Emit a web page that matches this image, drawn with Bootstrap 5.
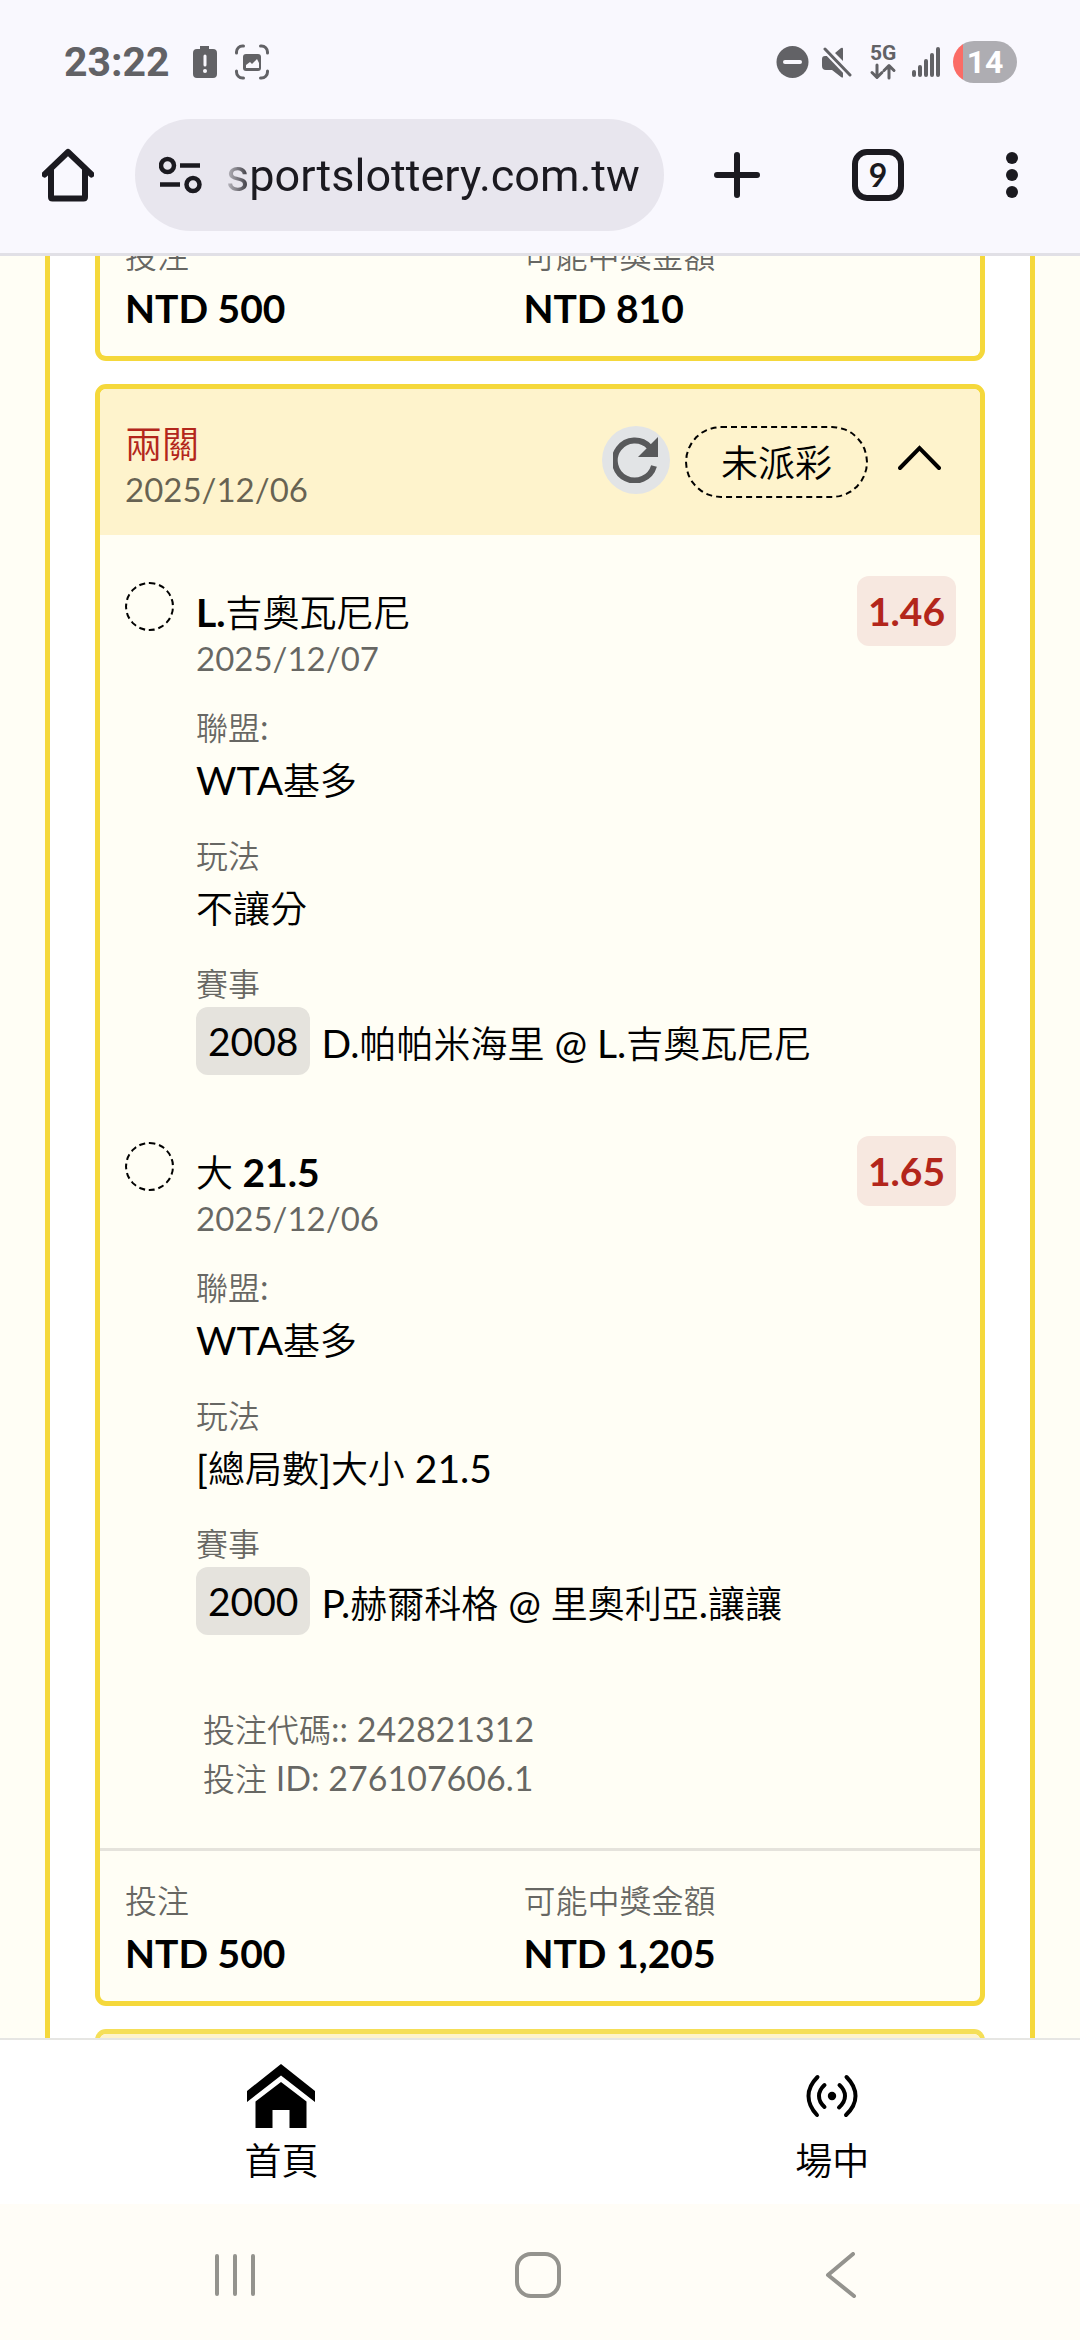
<!DOCTYPE html>
<html lang="zh-Hant">
<head>
<meta charset="utf-8">
<meta name="viewport" content="width=device-width, initial-scale=1">
<title>投注紀錄</title>
<link href="https://cdn.jsdelivr.net/npm/bootstrap@5.3.0/dist/css/bootstrap.min.css" rel="stylesheet">
<style>
  :root { --cream: #fffef5; --gold: #f5d83b; --ink: #1b1a20; --status: #626266; --red: #b3261b; }
  body { background: var(--cream); color: #000; font-family: Lato, "Noto Sans CJK TC", sans-serif; font-size: 39px; line-height: 58px; }
  .zh { font-family: "Noto Sans CJK TC", sans-serif; font-size: 37px; line-height: 1; font-weight: 350; }
  .text-sm .zh { font-size: 32px; }
  .text-sm { font-size: 34px; line-height: 48px; color: rgba(0,0,0,.6); }
  .day { font-size: 33px; line-height: 46px; color: rgba(0,0,0,.6); }
  svg { display: block; flex: none; }
  .icon-btn { border: 0; padding: 0; background: none; color: inherit; flex: none; }

  /* system status and browser bar */
  .chrome-top { background: #f9f8fe; border-bottom: 3px solid #e1e0e6; color: var(--ink); font-family: Roboto, sans-serif; }
  .status-row { height: 84px; padding: 40px 63px 0 64px; color: var(--status); line-height: 44px; }
  .clock { font-size: 41px; font-weight: 700; margin-right: 23px; }
  .capture { margin-left: 18px; }
  .signals { gap: 13px; }
  .batt { width: 64px; height: 42px; border-radius: 21px; background: linear-gradient(90deg, #fb6c66 10px, #aeadb2 10px); color: #fff; font-size: 32px; font-weight: 700; line-height: 42px; }
  .tool-row { padding: 35px 62px 22px 42px; }
  .omnibox { height: 112px; border-radius: 56px; background: #e8e6ee; margin: 0 50px 0 41px; padding: 0 22px 0 24px; gap: 24px; }
  .omnibox input { width: 0; font-size: 45px; color: var(--ink); border: 0; background: none; outline: 0; padding: 0; height: 80px; -webkit-mask-image: linear-gradient(90deg, rgba(0,0,0,.2), #000 28px); mask-image: linear-gradient(90deg, rgba(0,0,0,.2), #000 28px); }
  .tab-count { width: 52px; height: 52px; border: 6px solid var(--ink); border-radius: 15px; font: 700 32px/40px Lato, sans-serif; margin: 0 102px 0 92px; }

  /* bet list */
  .list-frame { margin: -50px 45px 0; padding: 0 45px; background: #fff; border: solid var(--gold); border-width: 0 5px; }
  .bet { border: 5px solid var(--gold); border-radius: 11px; background: var(--cream); overflow: hidden; margin-bottom: 23px; flex: none; }
  .bet-faded { border-color: #f5df58; }
  .bet-head { background: #fef3cc; padding: 31px 39px 23px 25px; min-height: 146px; }
  .row-tight { line-height: 46px; }
  .bet-type { color: var(--red); }
  .refresh { width: 68px; height: 68px; background: #e2e4e6; }
  .state { border: 2px dashed #000; border-radius: 36px; height: 72px; padding: 0 34px; margin-left: 15px; margin-right: 30px; line-height: 68px; white-space: nowrap; }
  .legs { padding: 41px 24px 46px 25px; }
  .leg + .leg { margin-top: 61px; }
  .dot { width: 49px; height: 49px; border: 2px dashed #000; border-radius: 50%; margin: 6px 22px 0 0; flex: none; }
  .leg-text { padding-top: 13px; }
  .item { margin-top: 22px; }
  .odds { height: 70px; border-radius: 12px; background: #f7e8e0; color: var(--red); padding: 0 11px; line-height: 70px; }
  .match-no { height: 68px; line-height: 68px; border-radius: 12px; background: #e5e3dd; padding: 0 12px; margin-right: 11px; }
  .match-row { line-height: 72px; }
  .codes { margin-top: 65px; padding-left: 78px; line-height: 49px; }
  .leg + .leg, .codes { position: static; }
  .bet-foot { padding: 25px 25px 19px; min-height: 150px; }
  .bet-foot.ruled { border-top: 3px solid #e5e3dc; }
  .stake { flex: 0 0 48%; }
  .leg { margin-bottom: 0; }
  .leg:first-child { margin-bottom: -4px; }

  /* bottom bars */
  .site-nav { border-top: 2px solid #e6e6e3; background: #fff; height: 166px; padding: 23px 0 0 6px; }
  .site-nav a { flex: 0 0 51vw; color: #000; text-decoration: none; }
  .nav-pic { height: 66px; margin-bottom: 12px; }
  .sys-nav { height: 136px; background: #fffdf7; color: #94938e; padding: 6px 220px 0 213px; }
</style>
</head>
<body class="vh-100 d-flex flex-column overflow-hidden">

<header class="chrome-top flex-shrink-0">
  <div class="status-row d-flex align-items-center">
    <span class="clock">23:22</span>
    <svg width="24" height="34" viewBox="0 0 24 34" fill="currentColor"><path d="M7 1h9v3h4a4 4 0 0 1 4 4v21a4 4 0 0 1-4 4H4a4 4 0 0 1-4-4V8a4 4 0 0 1 4-4h3z"/><path d="M12 11v9" stroke="#f9f8fe" stroke-width="3" stroke-linecap="round"/><circle cx="12" cy="26" r="2" fill="#f9f8fe"/></svg>
    <svg class="capture" width="34" height="36" viewBox="0 0 34 36" fill="none" stroke="currentColor" stroke-width="3" stroke-linecap="round"><path d="M1.500 9V8a6 6 0 0 1 6-6h1M25.500 2h1a6 6 0 0 1 6 6v1M32.500 27v1a6 6 0 0 1-6 6h-1M8.500 34h-1a6 6 0 0 1-6-6v-1"/><rect x="8" y="10" width="18" height="17" rx="3" fill="currentColor" stroke="none"/><path d="M11 24v-3l4-3 2 2 5-5 2 4v5z" fill="#f9f8fe" stroke="none"/></svg>
    <div class="signals d-flex align-items-center ms-auto">
      <svg width="33" height="34" viewBox="0 0 33 34"><circle cx="16.500" cy="17" r="16" fill="currentColor"/><path d="M9 17h15" stroke="#f9f8fe" stroke-width="4" stroke-linecap="round"/></svg>
      <svg width="30" height="32" viewBox="0 0 30 32" fill="currentColor"><path d="M0 13q0-3 3-3h5l13 13v8q0 1-2 0l-9-7H4q-4 0-4-4zM13 7l6-5q2-1 2 1v12z"/><path d="M3 3l25 26" stroke="#f9f8fe" stroke-width="7"/><path d="M3 3l25 26" stroke="currentColor" stroke-width="3" stroke-linecap="round"/></svg>
      <svg width="34" height="40" viewBox="0 0 34 40"><text x="5" y="18" font-family="Roboto, sans-serif" font-weight="700" font-size="21" fill="currentColor">5G</text><g fill="none" stroke="currentColor" stroke-width="3" stroke-linecap="round" stroke-linejoin="round"><path d="M12 23v12M7 30.500l5 5 5-5M24 36V24M19 28.500l5-5 5 5"/></g></svg>
      <svg width="28" height="30" viewBox="0 0 28 30" stroke="currentColor" stroke-width="4" stroke-linecap="round"><path d="M2 25v3M8 20v8M14 14v14M20 8v20M26 2v26"/></svg>
      <span class="batt text-center">14</span>
    </div>
  </div>
  <div class="tool-row d-flex align-items-center">
    <button class="icon-btn" aria-label="Home"><svg width="52" height="54" viewBox="0 0 52 54" fill="none" stroke="currentColor" stroke-width="6" stroke-linejoin="round" stroke-linecap="round"><path d="M2.500 26.500 26 4l23.500 22.500M9 22v27q0 1.500 1.500 1.500h31Q43 50.500 43 49V22"/></svg></button>
    <div class="omnibox flex-grow-1 d-flex align-items-center">
      <svg width="43" height="38" viewBox="0 0 43 38" fill="none" stroke="currentColor" stroke-width="4.500"><circle cx="8.500" cy="9.500" r="6.500"/><circle cx="34" cy="28.500" r="6.500"/><path d="M21 9.500h20M1 28.500h20"/></svg>
      <input class="flex-grow-1" type="text" aria-label="Address" value="sportslottery.com.tw">
    </div>
    <button class="icon-btn" aria-label="New tab"><svg width="46" height="46" viewBox="0 0 46 46" stroke="currentColor" stroke-width="6" stroke-linecap="round"><path d="M23 3v40M3 23h40"/></svg></button>
    <button class="icon-btn tab-count text-center" aria-label="Tabs">9</button>
    <button class="icon-btn" aria-label="Menu"><svg width="12" height="46" viewBox="0 0 12 46" fill="currentColor"><circle cx="6" cy="6" r="6"/><circle cx="6" cy="23" r="6"/><circle cx="6" cy="40" r="6"/></svg></button>
  </div>
</header>

<main class="flex-grow-1 overflow-hidden">
  <div class="list-frame d-flex flex-column">

    <section class="bet border-top-0">
      <div class="bet-foot d-flex">
        <div class="stake"><div class="text-sm"><span class="zh">投注</span></div><div class="fw-bold">NTD 500</div></div>
        <div><div class="text-sm"><span class="zh">可能中獎金額</span></div><div class="fw-bold">NTD 810</div></div>
      </div>
    </section>

    <section class="bet">
      <div class="bet-head d-flex align-items-center">
        <div class="flex-grow-1">
          <div class="row-tight bet-type"><span class="zh">兩關</span></div>
          <div class="day">2025/12/06</div>
        </div>
        <div class="d-flex align-items-center mb-2">
          <button class="icon-btn refresh rounded-circle d-flex align-items-center justify-content-center mb-1" aria-label="重新整理"><svg width="46" height="46" viewBox="0 0 46 46" fill="none"><path d="M36.500 10A20 20 0 1 0 41 29" stroke="#58595b" stroke-width="6"/><path d="M45 0v20H25z" fill="#58595b"/></svg></button>
          <span class="state"><span class="zh">未派彩</span></span>
          <button class="icon-btn mb-2" aria-label="收合"><svg width="43" height="26" viewBox="0 0 43 26" fill="none" stroke="#000" stroke-width="4" stroke-linecap="round"><path d="M2 23 21.500 3 41 23"/></svg></button>
        </div>
      </div>

      <div class="legs">
        <article class="leg d-flex align-items-start">
          <span class="dot"></span>
          <div class="leg-text flex-grow-1">
            <div class="row-tight fw-bold">L.<span class="zh">吉奧瓦尼尼</span></div>
            <div class="day">2025/12/07</div>
            <div class="item"><div class="text-sm"><span class="zh">聯盟</span>:</div><div>WTA<span class="zh">基多</span></div></div>
            <div class="item"><div class="text-sm"><span class="zh">玩法</span></div><div><span class="zh">不讓分</span></div></div>
            <div class="item"><div class="text-sm"><span class="zh">賽事</span></div>
              <div class="d-flex"><span class="match-no">2008</span><span class="match-row">D.<span class="zh">帕帕米海里</span> @ L.<span class="zh">吉奧瓦尼尼</span></span></div></div>
          </div>
          <span class="odds fw-bold text-center">1.46</span>
        </article>

        <article class="leg d-flex align-items-start">
          <span class="dot"></span>
          <div class="leg-text flex-grow-1">
            <div class="row-tight fw-bold"><span class="zh">大</span> 21.5</div>
            <div class="day">2025/12/06</div>
            <div class="item"><div class="text-sm"><span class="zh">聯盟</span>:</div><div>WTA<span class="zh">基多</span></div></div>
            <div class="item"><div class="text-sm"><span class="zh">玩法</span></div><div>[<span class="zh">總局數</span>]<span class="zh">大小</span> 21.5</div></div>
            <div class="item"><div class="text-sm"><span class="zh">賽事</span></div>
              <div class="d-flex"><span class="match-no">2000</span><span class="match-row">P.<span class="zh">赫爾科格</span> @ <span class="zh">里奧利亞</span>.<span class="zh">讓讓</span></span></div></div>
          </div>
          <span class="odds fw-bold text-center">1.65</span>
        </article>

        <div class="codes text-sm">
          <div><span class="zh">投注代碼</span>:: 242821312</div>
          <div><span class="zh">投注</span> ID: 276107606.1</div>
        </div>
      </div>

      <div class="bet-foot ruled d-flex">
        <div class="stake"><div class="text-sm"><span class="zh">投注</span></div><div class="fw-bold">NTD 500</div></div>
        <div><div class="text-sm"><span class="zh">可能中獎金額</span></div><div class="fw-bold">NTD 1,205</div></div>
      </div>
    </section>

    <section class="bet bet-faded"><div class="bet-head"></div></section>
  </div>
</main>

<nav class="site-nav d-flex flex-shrink-0 overflow-hidden">
  <a href="#" class="d-flex flex-column align-items-center">
    <span class="nav-pic d-flex align-items-center"><svg width="68" height="64" viewBox="0 0 68 64"><path d="M34 0 68 27v11L34 11.500 0 38V27z"/><path d="M34 18 59.500 37.500V64H42.500V46h-17v18H8.500V37.500z"/></svg></span>
    <span class="zh">首頁</span>
  </a>
  <a href="#" class="d-flex flex-column align-items-center">
    <span class="nav-pic d-flex align-items-center"><svg width="52" height="44" viewBox="0 0 52 44" fill="none" stroke="#000" stroke-width="4" stroke-linecap="round"><path d="M11.500 3Q2.500 12 2.500 22t8.500 19M40.500 3q9 9 9 19T40 41M18.500 11q-5.500 5-5.500 11t5.500 11M33.500 11q5.500 5 5.500 11t-6 11.500"/><circle cx="26" cy="22" r="4.200" fill="#000" stroke="none"/></svg></span>
    <span class="zh">場中</span>
  </a>
</nav>

<div class="sys-nav d-flex flex-shrink-0 align-items-center justify-content-between">
  <button class="icon-btn" aria-label="Recents"><svg width="44" height="44" viewBox="0 0 44 44" stroke="currentColor" stroke-width="4" stroke-linecap="round"><path d="M4 3v38M22 3v38M40 3v38"/></svg></button>
  <button class="icon-btn" aria-label="Home"><svg width="46" height="46" viewBox="0 0 46 46" fill="none" stroke="currentColor" stroke-width="4"><rect x="2" y="2" width="42" height="42" rx="14"/></svg></button>
  <button class="icon-btn" aria-label="Back"><svg width="42" height="46" viewBox="0 0 42 46" fill="none" stroke="currentColor" stroke-width="4" stroke-linecap="round" stroke-linejoin="round"><path d="M35 2 10 23l26 21"/></svg></button>
</div>

<script src="https://cdn.jsdelivr.net/npm/bootstrap@5.3.0/dist/js/bootstrap.bundle.min.js"></script>
</body>
</html>
